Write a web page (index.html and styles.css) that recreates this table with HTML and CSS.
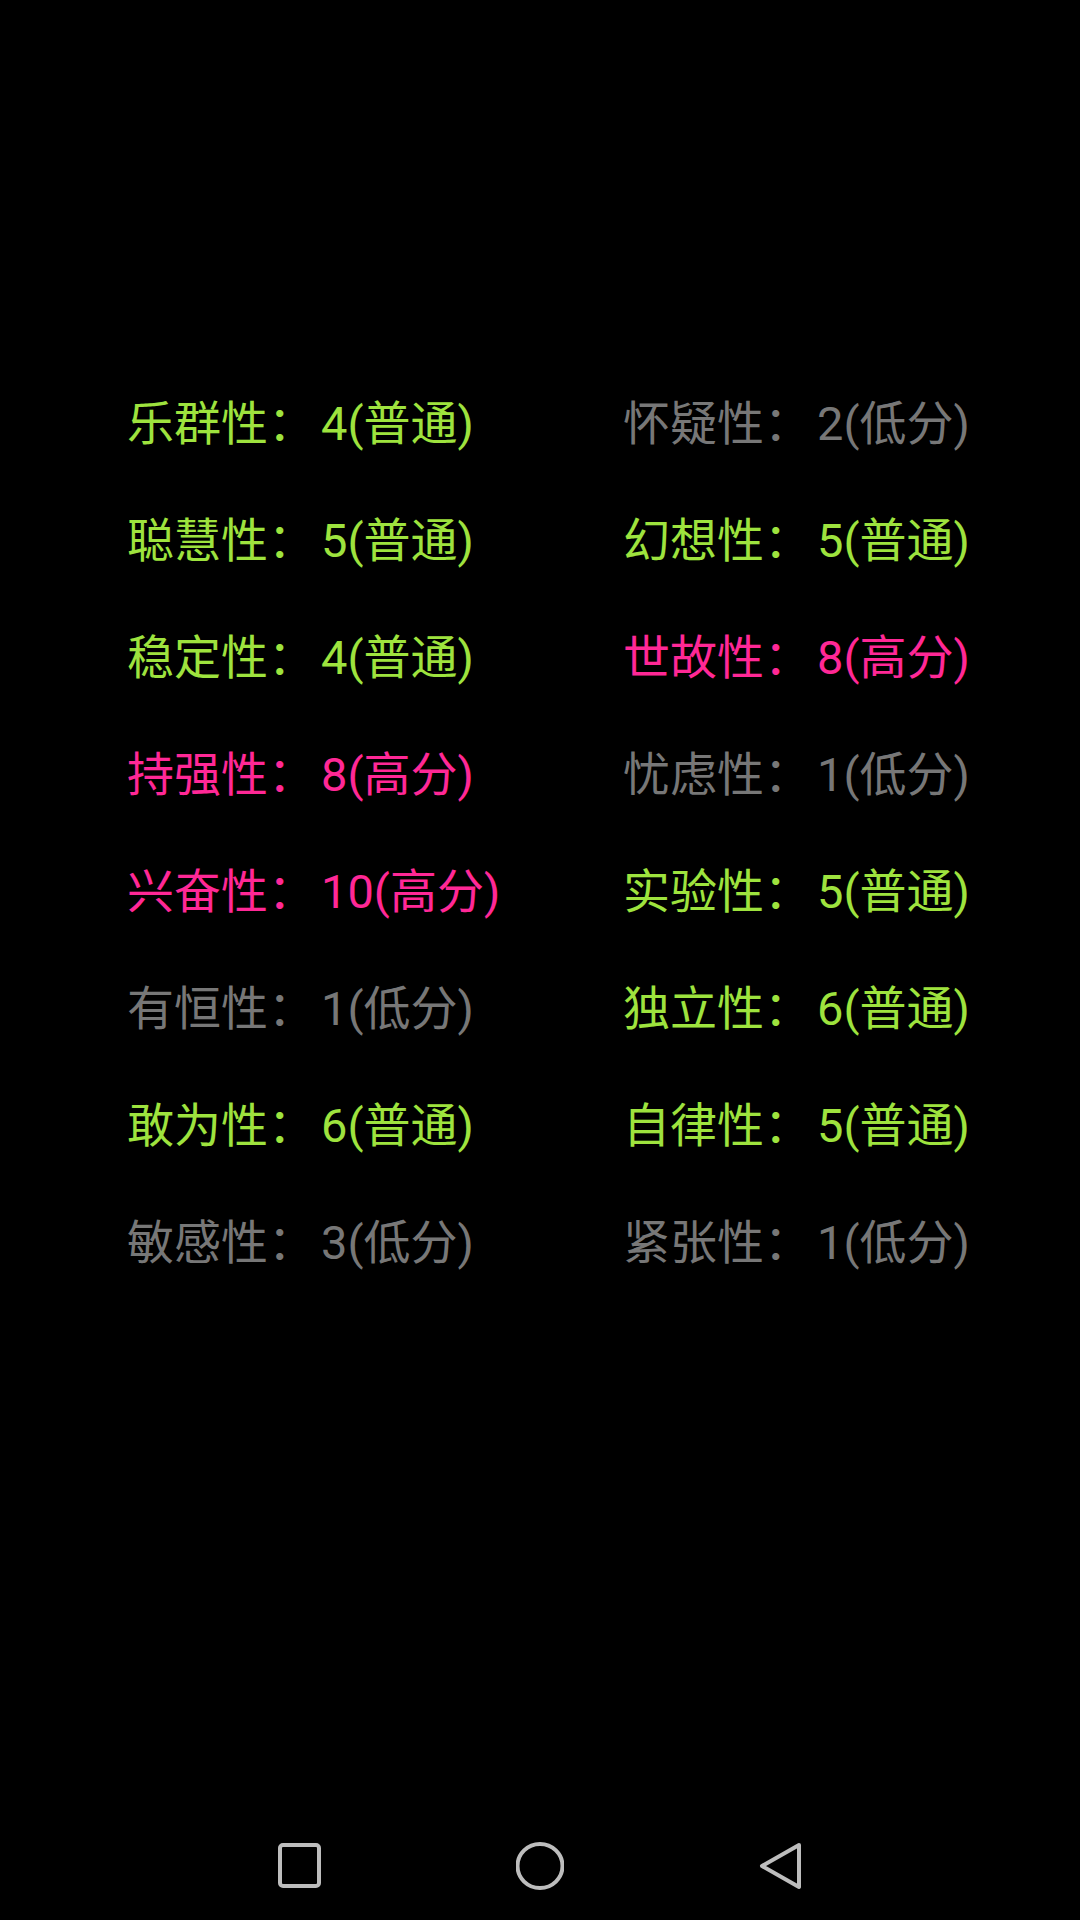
FILE: index.html
```html
<!DOCTYPE html>
<html lang="zh-CN">
<head>
<meta charset="utf-8">
<title>16PF</title>
<link rel="stylesheet" href="styles.css">
</head>
<body>
<main class="screen">
  <section class="grid">
    <div class="item green">乐群性<span class="colon">：</span>4(普通)</div>
    <div class="item gray">怀疑性<span class="colon">：</span>2(低分)</div>
    <div class="item green">聪慧性<span class="colon">：</span>5(普通)</div>
    <div class="item green">幻想性<span class="colon">：</span>5(普通)</div>
    <div class="item green">稳定性<span class="colon">：</span>4(普通)</div>
    <div class="item pink">世故性<span class="colon">：</span>8(高分)</div>
    <div class="item pink">持强性<span class="colon">：</span>8(高分)</div>
    <div class="item gray">忧虑性<span class="colon">：</span>1(低分)</div>
    <div class="item pink">兴奋性<span class="colon">：</span>10(高分)</div>
    <div class="item green">实验性<span class="colon">：</span>5(普通)</div>
    <div class="item gray">有恒性<span class="colon">：</span>1(低分)</div>
    <div class="item green">独立性<span class="colon">：</span>6(普通)</div>
    <div class="item green">敢为性<span class="colon">：</span>6(普通)</div>
    <div class="item green">自律性<span class="colon">：</span>5(普通)</div>
    <div class="item gray">敏感性<span class="colon">：</span>3(低分)</div>
    <div class="item gray">紧张性<span class="colon">：</span>1(低分)</div>
  </section>
  <div class="spacer"></div>
  <nav class="navbar">
    <svg class="nav-icon" viewBox="0 0 48 48" width="48" height="48">
      <rect x="4" y="3" width="39" height="41" rx="3" ry="3" fill="none" stroke="#bdbdbd" stroke-width="4"/>
    </svg>
    <svg class="nav-icon" viewBox="0 0 48 48" width="48" height="48">
      <ellipse cx="24" cy="24" rx="22.5" ry="22" fill="none" stroke="#bdbdbd" stroke-width="4"/>
    </svg>
    <svg class="nav-icon" viewBox="0 0 48 48" width="48" height="48">
      <path d="M43 3 L6 24 L43 45 Z" fill="none" stroke="#bdbdbd" stroke-width="4" stroke-linejoin="round"/>
    </svg>
  </nav>
</main>
</body>
</html>
```

FILE: styles.css
```css
html, body {
  margin: 0;
  padding: 0;
  background: #000;
}

.screen {
  width: 1080px;
  height: 1920px;
  display: flex;
  flex-direction: column;
  background: #000;
  font-family: Roboto, "Noto Sans CJK SC", "Noto Sans", sans-serif;
}

.grid {
  display: grid;
  grid-template-columns: 496px 1fr;
  grid-auto-rows: 117px;
  padding: 365px 0 0 127px;
}

.item {
  font-size: 47px;
  line-height: 117px;
  white-space: nowrap;
}

.colon {
  margin-right: 6px;
}

.green { color: #9ee33e; }
.pink { color: #ff2896; }
.gray { color: #777777; }

.spacer {
  flex: 1;
}

.navbar {
  height: 108px;
  display: flex;
  justify-content: center;
  align-items: center;
  gap: 192px;
}

.nav-icon {
  display: block;
}
```
